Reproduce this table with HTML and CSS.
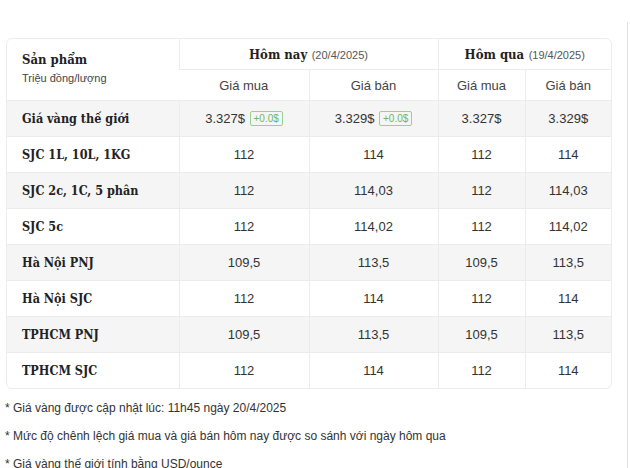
FILE: index.html
```html
<!DOCTYPE html>
<html lang="vi">
<head>
<meta charset="utf-8">
<link rel="stylesheet" href="styles.css">
</head>
<body>
<div class="page">
  <main class="main">
    <div class="table-wrap">
      <table class="gold">
        <colgroup>
          <col class="c-name"><col class="c-a"><col class="c-b"><col class="c-c"><col class="c-d">
        </colgroup>
        <thead>
          <tr class="h1">
            <th rowspan="2" class="prod"><div class="prod-title">Sản phẩm</div><div class="prod-unit">Triệu đồng/lượng</div></th>
            <th colspan="2" class="day"><span class="day-name">Hôm nay</span> <span class="day-date">(20/4/2025)</span></th>
            <th colspan="2" class="day"><span class="day-name">Hôm qua</span> <span class="day-date">(19/4/2025)</span></th>
          </tr>
          <tr class="h2">
            <th>Giá mua</th><th>Giá bán</th><th>Giá mua</th><th>Giá bán</th>
          </tr>
        </thead>
        <tbody>
          <tr><td class="name">Giá vàng thế giới</td><td>3.327$ <span class="badge">+0.0$</span></td><td>3.329$ <span class="badge">+0.0$</span></td><td>3.327$</td><td>3.329$</td></tr>
          <tr><td class="name">SJC 1L, 10L, 1KG</td><td>112</td><td>114</td><td>112</td><td>114</td></tr>
          <tr><td class="name">SJC 2c, 1C, 5 phân</td><td>112</td><td>114,03</td><td>112</td><td>114,03</td></tr>
          <tr><td class="name">SJC 5c</td><td>112</td><td>114,02</td><td>112</td><td>114,02</td></tr>
          <tr><td class="name">Hà Nội PNJ</td><td>109,5</td><td>113,5</td><td>109,5</td><td>113,5</td></tr>
          <tr><td class="name">Hà Nội SJC</td><td>112</td><td>114</td><td>112</td><td>114</td></tr>
          <tr><td class="name">TPHCM PNJ</td><td>109,5</td><td>113,5</td><td>109,5</td><td>113,5</td></tr>
          <tr><td class="name">TPHCM SJC</td><td>112</td><td>114</td><td>112</td><td>114</td></tr>
        </tbody>
      </table>
    </div>
    <p class="note">* Giá vàng được cập nhật lúc: 11h45 ngày 20/4/2025</p>
    <p class="note">* Mức độ chênh lệch giá mua và giá bán hôm nay được so sánh với ngày hôm qua</p>
    <p class="note">* Giá vàng thế giới tính bằng USD/ounce</p>
  </main>
  <aside class="side"></aside>
</div>
</body>
</html>
```
FILE: styles.css
```css
html, body {
  margin: 0;
  padding: 0;
  background: #fff;
  overflow: hidden;
}
body {
  font-family: "Liberation Sans", Arial, sans-serif;
  color: #333;
}
.page {
  display: flex;
  height: 468px;
}
.main {
  width: 606px;
  padding: 38px 0 0 6px;
  flex: none;
}
.side {
  margin-left: 15px;
  margin-top: 22px;
  border-left: 1px solid #e2e2e2;
  flex: 1;
}
.table-wrap {
  border: 1px solid #ececec;
  border-radius: 6px;
  overflow: hidden;
}
.gold {
  width: 100%;
  border-collapse: collapse;
  table-layout: fixed;
}
.c-name { width: 172px; }
.c-a { width: 130px; }
.c-b { width: 129px; }
.c-c { width: 87px; }
.c-d { width: 86px; }
.gold th, .gold td {
  padding: 0;
  text-align: center;
  border-left: 1px solid #ececec;
  border-top: 1px solid #ececec;
  font-weight: normal;
}
.gold tr > :first-child { border-left: none; }
.gold thead tr.h1 > * { border-top: none; }
.h1 th { height: 30px; }
.h2 th {
  height: 30px;
  font-size: 13px;
  color: #444;
}
.prod {
  text-align: left !important;
  padding-left: 15px !important;
  vertical-align: top;
}
.prod-title {
  font-family: "DejaVu Serif", "Liberation Serif", serif;
  font-stretch: condensed;
  font-weight: bold;
  font-size: 13px;
  color: #222;
  margin-top: 12px;
  line-height: 18px;
}
.prod-unit {
  font-size: 11px;
  color: #444;
  margin-top: 3px;
}
.day-name {
  font-family: "DejaVu Serif", "Liberation Serif", serif;
  font-stretch: condensed;
  font-weight: bold;
  font-size: 13px;
  color: #222;
}
.day-date {
  font-size: 11px;
  color: #555;
}
.gold td {
  height: 35px;
  font-size: 13px;
  color: #333;
}
.gold tbody tr:nth-child(odd) td { background: #f5f5f5; }
.gold td.name {
  text-align: left;
  padding-left: 15px;
  font-family: "DejaVu Serif", "Liberation Serif", serif;
  font-stretch: condensed;
  font-weight: bold;
  font-size: 12.5px;
  color: #222;
}
.badge {
  display: inline-block;
  font-size: 10px;
  color: #6cb85a;
  border: 1px solid #9ad28c;
  border-radius: 2px;
  padding: 1px 3px;
  line-height: 11px;
  margin-left: 1px;
  vertical-align: 1px;
}
.note {
  margin: 10px 0 0 -1px;
  font-size: 12px;
  line-height: 18px;
  color: #333;
  white-space: nowrap;
}
```
